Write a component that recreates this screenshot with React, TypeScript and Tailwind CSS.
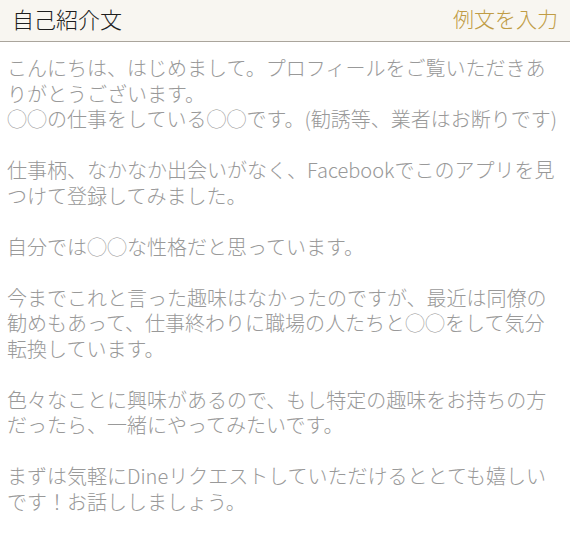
import React from "react";

const paragraphs: string[][] = [
  [
    "こんにちは、はじめまして。プロフィールをご覧いただきあ",
    "りがとうございます。",
    "◯◯の仕事をしている◯◯です。(勧誘等、業者はお断りです)",
  ],
  ["仕事柄、なかなか出会いがなく、Facebookでこのアプリを見", "つけて登録してみました。"],
  ["自分では◯◯な性格だと思っています。"],
  [
    "今までこれと言った趣味はなかったのですが、最近は同僚の",
    "勧めもあって、仕事終わりに職場の人たちと◯◯をして気分",
    "転換しています。",
  ],
  ["色々なことに興味があるので、もし特定の趣味をお持ちの方", "だったら、一緒にやってみたいです。"],
  ["まずは気軽にDineリクエストしていただけるととても嬉しい", "です！お話ししましょう。"],
];

export default function App() {
  return (
    <div
      className="w-[570px] h-[542px] bg-white overflow-hidden"
      style={{ fontFamily: '"Noto Sans CJK JP", "Noto Sans", sans-serif' }}
    >
      <div className="h-[42px] flex items-center justify-between px-[12px] pb-[5px] bg-[#f8f6f1] border-b border-[#aaa59c]">
        <span className="text-[22px] leading-none font-light text-[#1e1e1e]">自己紹介文</span>
        <span className="text-[21px] leading-none font-light text-[#c09c45]">例文を入力</span>
      </div>
      <div className="pt-[13px] pl-[7px] text-[20px] leading-[25.5px] font-light text-[#999999] whitespace-nowrap flex flex-col gap-[25.5px]">
        {paragraphs.map((p, i) => (
          <div key={i}>
            {p.map((line, j) => (
              <div key={j}>{line}</div>
            ))}
          </div>
        ))}
      </div>
    </div>
  );
}
